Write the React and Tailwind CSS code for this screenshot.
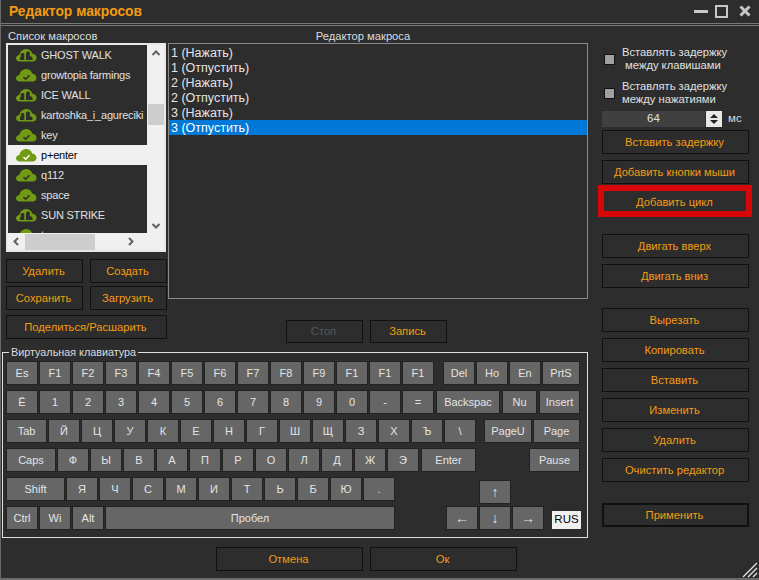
import React from 'react';

const macros = [
  { name: 'GHOST WALK', icon: 'user' },
  { name: 'growtopia farmings', icon: 'check' },
  { name: 'ICE WALL', icon: 'user' },
  { name: 'kartoshka_i_agureciki', icon: 'user' },
  { name: 'key', icon: 'check' },
  { name: 'p+enter', icon: 'check', selected: true },
  { name: 'q112', icon: 'check' },
  { name: 'space', icon: 'check' },
  { name: 'SUN STRIKE', icon: 'user' },
  { name: 'tes', icon: 'check' },
];

const steps = ['1 (Нажать)', '1 (Отпустить)', '2 (Нажать)', '2 (Отпустить)', '3 (Нажать)', '3 (Отпустить)'];

const row1 = ['Es', 'F1', 'F2', 'F3', 'F4', 'F5', 'F6', 'F7', 'F8', 'F9', 'F1', 'F1', 'F1'];
const row2 = ['Ё', '1', '2', '3', '4', '5', '6', '7', '8', '9', '0', '-', '='];
const row3 = ['Й', 'Ц', 'У', 'К', 'Е', 'Н', 'Г', 'Ш', 'Щ', 'З', 'Х', 'Ъ', '\\'];
const row4 = ['Ф', 'Ы', 'В', 'А', 'П', 'Р', 'О', 'Л', 'Д', 'Ж', 'Э'];
const row5 = ['Я', 'Ч', 'С', 'М', 'И', 'Т', 'Ь', 'Б', 'Ю', '.'];

const CloudIcon = ({ type, selected }) => (
  <svg width="21" height="14" viewBox="0 0 21 14" className="shrink-0">
    <path
      d="M4 13.5C1.5 13.5 0 12 0 10.2C0 8.3 1.6 7 3.4 7C4 3.2 7 1 10.2 1C13.2 1 15.4 2.8 16.2 5.4C18.8 5.6 20.5 7.5 20.5 9.8C20.5 12 19 13.5 16.5 13.5Z"
      fill="#6f9a12"
    />
    {type === 'check' ? (
      <path d="M7.5 9L9.7 11.2L13.5 7.2" fill="none" stroke={selected ? '#ffffff' : '#2d2d2d'} strokeWidth="1.6" />
    ) : (
      <g fill="#2d2d2d">
        <path d="M4 12V9.5C4 8.8 4.6 8.5 5.4 8.3C4.9 7.8 4.8 7.2 4.8 6.6C4.8 5.6 5.6 5 6.6 5C7.6 5 8.3 5.6 8.3 6.6V12Z" />
        <path d="M10 12V5.5C10 4.3 10.8 3.5 12 3.5C13.2 3.5 14 4.3 14 5.5C14 6.5 13.8 7.4 13.4 8C15 8.4 16.5 8.9 16.5 10V12Z" />
      </g>
    )}
  </svg>
);

const Btn = ({ children, className = 'h-6', dim }) => (
  <button className={`flex items-center justify-center border border-[#111111] bg-[#2d2d2d] pr-[2px] text-[11.2px] ${dim ? 'text-[#555555]' : 'text-[#f39c12]'} ${className}`}>
    {children}
  </button>
);

const Key = ({ children, className = 'w-[30px] text-[11px]' }) => (
  <div className={`flex h-[22px] shrink-0 items-center justify-center bg-[#666666] text-[11px] text-[#e4e4e4] shadow-[0_0_0_1px_#222222] ${className}`}>
    {children}
  </div>
);

const Keyboard = () => (
  <fieldset className="relative h-[192px] w-[586px] border border-[#e0e0e0] pl-[4px]">
    <legend className="ml-[2px] px-[2px] text-[10.8px] leading-[13px] text-[#dcdcdc]">Виртуальная клавиатура</legend>
    <div className="flex flex-col gap-[7px] pt-[3px]">
      <div className="flex gap-[3px]">
        {row1.map((k, i) => <Key key={i}>{k}</Key>)}
        <div className="ml-[8px] flex gap-[3px]">
          <Key>Del</Key>
          <Key>Ho</Key>
          <Key>En</Key>
          <Key className="w-[36px]">PrtS</Key>
        </div>
      </div>
      <div className="flex gap-[3px]">
        {row2.map((k, i) => <Key key={i}>{k}</Key>)}
        <Key className="ml-[1px] w-[62px]">Backspac</Key>
        <Key className="ml-[1px] w-[33px]">Nu</Key>
        <Key className="ml-[1px] w-[39px]">Insert</Key>
      </div>
      <div className="flex gap-[3px]">
        <Key className="w-[39px]">Tab</Key>
        {row3.map((k, i) => <Key key={i}>{k}</Key>)}
        <Key className="ml-[7px] w-[46px]">PageU</Key>
        <Key className="w-[45px]">Page</Key>
      </div>
      <div className="flex gap-[3px]">
        <Key className="w-[48px]">Caps</Key>
        {row4.map((k, i) => <Key key={i}>{k}</Key>)}
        <Key className="ml-[1px] w-[53px]">Enter</Key>
        <Key className="ml-[52px] w-[49px]">Pause</Key>
      </div>
      <div className="flex h-[22px] gap-[3px]">
        <Key className="w-[57px]">Shift</Key>
        {row5.map((k, i) => <Key key={i}>{k}</Key>)}
        <Key className="ml-[83px] mt-[3px] w-[30px] !text-[14px]">↑</Key>
      </div>
      <div className="flex gap-[3px]">
        <Key>Ctrl</Key>
        <Key>Wi</Key>
        <Key>Alt</Key>
        <Key className="w-[288px]">Пробел</Key>
        <Key className="ml-[50px] w-[30px] !text-[14px]">←</Key>
        <Key className="w-[30px] !text-[14px]">↓</Key>
        <Key className="w-[30px] !text-[14px]">→</Key>
        <div className="ml-[6px] mt-[4px] flex h-[18px] w-[29px] items-center justify-center bg-[#f0f0f0] text-[11.5px] text-black">RUS</div>
      </div>
    </div>
  </fieldset>
);

const MacroList = () => (
  <div className="relative h-[209px] w-[160px] overflow-hidden border-2 border-[#e8e8e8] bg-[#2d2d2d]">
    <div className="flex flex-col">
      {macros.map((m) => (
        <div
          key={m.name}
          className={`flex h-[20px] shrink-0 items-center gap-[4px] pl-[8px] text-[11px] tracking-[-0.2px] ${m.selected ? 'bg-[#f0f0f0] text-black' : 'text-[#e0e0e0]'}`}
        >
          <CloudIcon type={m.icon} selected={m.selected} />
          <span className="whitespace-nowrap">{m.name}</span>
        </div>
      ))}
    </div>
    {/* scrollbars */}
    <div className="absolute bottom-0 right-0 top-0 flex w-[17px] flex-col items-center bg-[#f0f0f0] pl-px text-[#606060]">
      <svg width="10" height="17" viewBox="0 0 10 17"><path d="M1.5 10L5 6.5L8.5 10" fill="none" stroke="#606060" strokeWidth="2" /></svg>
      <div className="mt-[42px] h-[21px] w-full bg-[#cdcdcd]" />
    </div>
    <div className="absolute bottom-0 right-0 top-[172px] flex w-[17px] justify-center pl-px">
      <svg width="10" height="17" viewBox="0 0 10 17"><path d="M1.5 7L5 10.5L8.5 7" fill="none" stroke="#606060" strokeWidth="2" /></svg>
    </div>
    <div className="absolute bottom-0 left-0 right-0 flex h-[17px] items-center bg-[#f0f0f0]">
      <svg width="17" height="17" viewBox="0 0 17 17" className="shrink-0"><path d="M10 5L6.5 8.5L10 12" fill="none" stroke="#606060" strokeWidth="2" /></svg>
      <div className="h-[16px] w-[70px] bg-[#cdcdcd]" />
      <svg width="17" height="17" viewBox="0 0 17 17" className="ml-[27px] shrink-0"><path d="M7 5L10.5 8.5L7 12" fill="none" stroke="#606060" strokeWidth="2" /></svg>
    </div>
  </div>
);

const Check = ({ children }) => (
  <div className="flex h-[26px] items-center gap-[7px] pl-[2px]">
    <div className="h-[11px] w-[11px] shrink-0 border border-[#111111] bg-[#a0a0a0]" />
    <div className="text-[11.2px] leading-[13px] text-[#e0e0e0]">{children}</div>
  </div>
);

export default function App() {
  return (
    <div className="relative flex h-[580px] w-[759px] flex-col overflow-hidden border-b-2 border-l border-[#6a6a6a] bg-[#2d2d2d] font-['Liberation_Sans',sans-serif]">
      {/* title bar */}
      <div className="flex h-[26px] shrink-0 items-center justify-between border-b border-[#777777] pb-[2px] pl-[8px] pr-[8px] shadow-[inset_0_-1px_0_#2d2d2d,inset_0_-2px_0_#777777]">
        <div className="mt-[1px] text-[13.8px] font-bold text-[#f39c12]">Редактор макросов</div>
        <div className="mb-[1px] flex items-center">
          <div className="h-[3px] w-[14px] bg-[#c8c8c8]" />
          <div className="ml-[7px] h-[13px] w-[13px] border-2 border-[#c8c8c8]" />
          <svg width="12" height="12" viewBox="0 0 12 12" className="ml-[11px]"><path d="M1.5 1.5L10.5 10.5M10.5 1.5L1.5 10.5" stroke="#c8c8c8" strokeWidth="3" /></svg>
        </div>
      </div>

      <div className="flex flex-1">
        {/* main area */}
        <div className="flex w-[601px] shrink-0 flex-col">
          <div className="flex h-[320px] shrink-0">
            <div className="flex w-[167px] shrink-0 flex-col pl-[5px]">
              <div className="pl-[2px] pt-[3px] text-[11.2px] leading-[14px] text-[#dcdcdc]">Список макросов</div>
              <MacroList />
              <div className="mt-[7px] flex gap-[7px]">
                <Btn className="h-[24px] w-[77px]">Удалить</Btn>
                <Btn className="h-[24px] w-[77px]">Создать</Btn>
              </div>
              <div className="mt-[3px] flex gap-[7px]">
                <Btn className="h-[24px] w-[77px]">Сохранить</Btn>
                <Btn className="h-[24px] w-[77px]">Загрузить</Btn>
              </div>
              <Btn className="mt-[5px] h-[24px] w-[161px]">Поделиться/Расшарить</Btn>
            </div>
            <div className="flex w-[420px] shrink-0 flex-col">
              <div className="pr-[30px] pt-[3px] text-center text-[11.2px] leading-[14px] text-[#dcdcdc]">Редактор макроса</div>
              <div className="h-[256px] border border-[#8a8a8a] pt-px">
                {steps.map((s, i) => (
                  <div key={i} className={`flex h-[15px] items-center pl-[2px] pt-[1px] text-[12.5px] text-[#e4e4e4] ${i === 5 ? 'bg-[#0078d7] text-white' : ''}`}>
                    {s}
                  </div>
                ))}
              </div>
              <div className="mt-[21px] flex justify-center gap-[7px] pr-[23px]">
                <Btn dim className="h-[23px] w-[77px]">Стоп</Btn>
                <Btn className="h-[23px] w-[77px]">Запись</Btn>
              </div>
            </div>
          </div>
          <div className="pl-[1px]">
            <Keyboard />
          </div>
          <div className="mt-[9px] flex gap-[7px] pl-[215px]">
            <Btn className="h-[24px] w-[147px]">Отмена</Btn>
            <Btn className="h-[24px] w-[147px]">Ок</Btn>
          </div>
        </div>

        {/* right column */}
        <div className="flex w-[147px] shrink-0 flex-col">
          <div className="mt-[20px] flex flex-col gap-[8px]">
            <Check>Вставлять задержку<br />&nbsp;между клавишами</Check>
            <Check>Вставлять задержку<br />между нажатиями</Check>
          </div>
          <div className="mt-[5px] flex h-[16px] items-center">
            <div className="flex h-[16px] w-[103px] items-center justify-center bg-[#404040] text-[11.5px] text-[#e0e0e0]">64</div>
            <div className="ml-px flex h-[16px] w-[16px] flex-col items-center justify-center gap-[2px] bg-[#e8e8e8]">
              <svg width="8" height="4" viewBox="0 0 8 4"><path d="M4 0L8 4H0Z" fill="#222222" /></svg>
              <svg width="8" height="4" viewBox="0 0 8 4"><path d="M0 0H8L4 4Z" fill="#222222" /></svg>
            </div>
            <div className="ml-[6px] text-[11.5px] text-[#dcdcdc]">мс</div>
          </div>
          <div className="mt-[3px] flex flex-col gap-[6px]">
            <Btn>Вставить задержку</Btn>
            <Btn>Добавить кнопки мыши</Btn>
            <div className="relative">
              <Btn className="h-6 w-full">Добавить цикл</Btn>
              <div className="absolute -bottom-[3px] -left-[4px] -right-[3px] -top-[5px] border-[6px] border-[#d80707]" />
            </div>
          </div>
          <div className="mt-[20px] flex flex-col gap-[6px]">
            <Btn>Двигать вверх</Btn>
            <Btn>Двигать вниз</Btn>
          </div>
          <div className="mt-[20px] flex flex-col gap-[6px]">
            <Btn>Вырезать</Btn>
            <Btn>Копировать</Btn>
            <Btn>Вставить</Btn>
            <Btn>Изменить</Btn>
            <Btn>Удалить</Btn>
            <Btn>Очистить редактор</Btn>
          </div>
          <Btn className="mt-[21px] h-6 border-2">Применить</Btn>
        </div>
      </div>

      {/* resize grip */}
      <svg width="16" height="16" viewBox="0 0 16 16" className="absolute bottom-0 right-[1px]">
        <path d="M1 15L15 1M6 15L15 6M11 15L15 11" stroke="#e0e0e0" strokeWidth="1.4" />
      </svg>
    </div>
  );
}
